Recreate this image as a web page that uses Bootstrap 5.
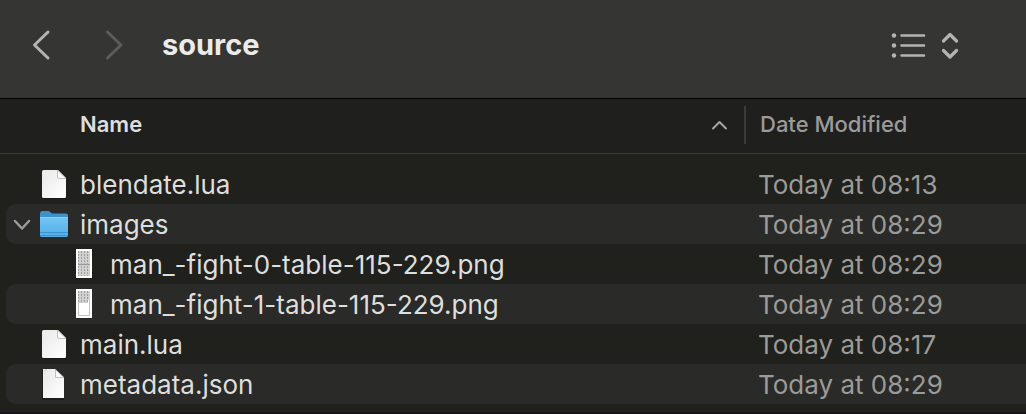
<!DOCTYPE html>
<html lang="en" data-bs-theme="dark">
<head>
<meta charset="utf-8">
<meta name="viewport" content="width=device-width, initial-scale=1">
<title>source</title>
<link href="https://cdn.jsdelivr.net/npm/bootstrap@5.3.0/dist/css/bootstrap.min.css" rel="stylesheet">
<style>
body{background:#20201c;color:#dededd;font-family:Inter,"Liberation Sans",sans-serif;overflow-x:hidden}
svg{display:block;flex:none}
button{color:inherit;background:none;border:0;padding:0}
.toolbar{background:#353533;border-bottom:1px solid #000;height:99px;padding:0 66px 8px 30px;color:#b4b4b2}
.toolbar h1{font-size:29px;line-height:36px;font-weight:700;color:#ebebea;margin-left:36px}
.forward{margin-left:48px;color:#5c5c5a}
.listing{padding-bottom:8px;border-bottom:2px solid #19141a}
.files{width:100%;table-layout:fixed;border-collapse:separate;border-spacing:0}
.date-col{width:282px}
.files thead th{background:#1f1f1e;border-bottom:1px solid #3b3b39;height:55px;padding:0 0 4px;font-size:22px;line-height:28px}
.sort{padding-left:80px;padding-right:16px;font-weight:600}
.divided{border-left:2px solid #3b3b39;padding-left:14px;height:38px;line-height:36px;font-weight:500;color:#9b9b99;margin-top:2px}
.files td{padding:0;font-size:26px;line-height:42px;white-space:nowrap}
.files tbody tr:first-child td{padding-top:10px}
.file-name{height:40px;margin-left:6px;padding-top:2px;padding-left:32px;border-radius:10px 0 0 10px}
.file-name.open{padding-left:7px}
.file-name.child{padding-left:62px}
.file-name svg{margin:0 10px 2px 0}
.file-name .chevron{margin:0 7px 2px 0}
.file-date{height:40px;padding-left:14px;color:#9b9b99}
.files tbody tr:nth-child(even) .file-name,.files tbody tr:nth-child(even) .file-date{background:#2a2a28}
</style>
</head>
<body>
<svg width="0" height="0" class="position-absolute" aria-hidden="true">
<defs>
<linearGradient id="paper" x1="0" y1="0" x2="1" y2="1"><stop offset="0" stop-color="#e9e9e9"/><stop offset="1" stop-color="#fff"/></linearGradient>
<linearGradient id="blue" x1="0" y1="0" x2="0" y2="1"><stop offset="0" stop-color="#73c5f5"/><stop offset="1" stop-color="#52aee8"/></linearGradient>
<pattern id="cells" width="3" height="3" patternUnits="userSpaceOnUse"><path d="M0 0h3v3H0z" fill="#d0d0d0"/><path d="M1 0h1v2H1z" fill="#a0a0a0"/></pattern>
<symbol id="doc" viewBox="0 0 32 32"><path d="M7 2h14l7 8v18q0 2-2 2H6q-2 0-2-2V4q0-2 2-2z" fill="#111" opacity=".5" transform="translate(0 1)"/><path d="M5.500 2H20l8 8v18.500q0 1.500-1.500 1.500h-21Q4 30 4 28.500v-25Q4 2 5.500 2z" fill="url(#paper)"/><path d="M19.500 2v7q0 1.500 1.500 1.500h7z" fill="#fafafa" stroke="#aaa" stroke-width=".7"/></symbol>
</defs>
</svg>
<header class="toolbar d-flex align-items-center">
<button type="button" aria-label="Back"><svg width="22" height="32" viewBox="0 0 22 32" fill="none" stroke="currentColor" stroke-width="3" stroke-linecap="round" stroke-linejoin="round"><path d="M18 3 4.500 16 18 29"/></svg></button>
<button type="button" class="forward" aria-label="Forward"><svg width="26" height="32" viewBox="0 0 26 32" fill="none" stroke="currentColor" stroke-width="3" stroke-linecap="round" stroke-linejoin="round"><path d="M7.500 3 21 16 7.500 29"/></svg></button>
<h1 class="mb-0">source</h1>
<button type="button" class="ms-auto" aria-label="View as list"><svg width="70" height="30" viewBox="0 0 70 30"><g fill="currentColor"><circle cx="4" cy="5.500" r="2.200"/><circle cx="4" cy="15.500" r="2.200"/><circle cx="4" cy="25.500" r="2.200"/></g><path d="M11.500 5.500H34M11.500 15.500H34M11.500 25.500H34" stroke="currentColor" stroke-width="2.500" stroke-linecap="round"/><path d="M53.500 11 60 4.500l6.500 6.500M53.500 20.500l6.500 6.500 6.500-6.500" fill="none" stroke="currentColor" stroke-width="3.200" stroke-linecap="round" stroke-linejoin="round"/></svg></button>
</header>
<main class="listing">
<table class="files">
<colgroup><col><col class="date-col"></colgroup>
<thead><tr>
<th scope="col" aria-sort="ascending"><button type="button" class="sort w-100 d-flex align-items-center justify-content-between">Name<svg width="17" height="12" viewBox="0 0 17 12" fill="none" stroke="#a5a5a3" stroke-width="2" stroke-linecap="round" stroke-linejoin="round"><path d="M2 10.500 8.500 4l6.500 6.500"/></svg></button></th>
<th scope="col"><div class="divided">Date Modified</div></th>
</tr></thead>
<tbody>
<tr><td><div class="file-name d-flex align-items-center"><svg width="32" height="32"><use href="#doc"/></svg>blendate.lua</div></td><td><div class="file-date">Today at 08:13</div></td></tr>
<tr><td><div class="file-name open d-flex align-items-center"><button type="button" class="chevron" aria-label="Collapse images"><svg class="m-0" width="18" height="14" viewBox="0 0 18 14" fill="none" stroke="#9b9b99" stroke-width="2.500" stroke-linecap="round" stroke-linejoin="round"><path d="M2 4 9 11.500 16 4"/></svg></button><svg width="32" height="32" viewBox="0 0 32 32"><path d="M2 5.500Q2 3 4 3h6q1.500 0 2.500 1.200 1 1.300 2.500 1.300h13q2 0 2 2V27q0 2-2 2H4q-2 0-2-2z" fill="#3c92cc"/><path d="M2 9h28v18q0 2-2 2H4q-2 0-2-2z" fill="url(#blue)"/><path d="M2 24.500h28M2 27.500h28" stroke="#3f94cd"/><path d="M2 9.500h28" stroke="#8bd0f7"/></svg>images</div></td><td><div class="file-date">Today at 08:29</div></td></tr>
<tr><td><div class="file-name child d-flex align-items-center"><svg width="32" height="32" viewBox="0 0 32 32"><path d="M8 1h16v29H8z" fill="#fff"/><path d="M10 3h12v25H10z" fill="url(#cells)"/><path d="M10 16.500h12" stroke="#999"/></svg>man_-fight-0-table-115-229.png</div></td><td><div class="file-date">Today at 08:29</div></td></tr>
<tr><td><div class="file-name child d-flex align-items-center"><svg width="32" height="32" viewBox="0 0 32 32"><path d="M8 1h16v29H8z" fill="#fff"/><path d="M10.500 3.500h11v24h-11z" fill="#fff" stroke="#c4c4c4"/><path d="M10 3h12v9h-2v3H10z" fill="url(#cells)"/></svg>man_-fight-1-table-115-229.png</div></td><td><div class="file-date">Today at 08:29</div></td></tr>
<tr><td><div class="file-name d-flex align-items-center"><svg width="32" height="32"><use href="#doc"/></svg>main.lua</div></td><td><div class="file-date">Today at 08:17</div></td></tr>
<tr><td><div class="file-name d-flex align-items-center"><svg width="32" height="32" viewBox="0 0 32 32"><path d="M4 2h13l9 9v21H4z" fill="#111" opacity=".5"/><path d="M5 1h12l9 9v20H5z" fill="url(#paper)"/><path d="M17.500 1.500V9.500H26z" fill="#fafafa" stroke="#aaa" stroke-width=".7"/><path d="M7 3V2h2" fill="none" stroke="#bbb" stroke-width=".7"/></svg>metadata.json</div></td><td><div class="file-date">Today at 08:29</div></td></tr>
</tbody>
</table>
</main>
<script src="https://cdn.jsdelivr.net/npm/bootstrap@5.3.0/dist/js/bootstrap.bundle.min.js"></script>
</body>
</html>
